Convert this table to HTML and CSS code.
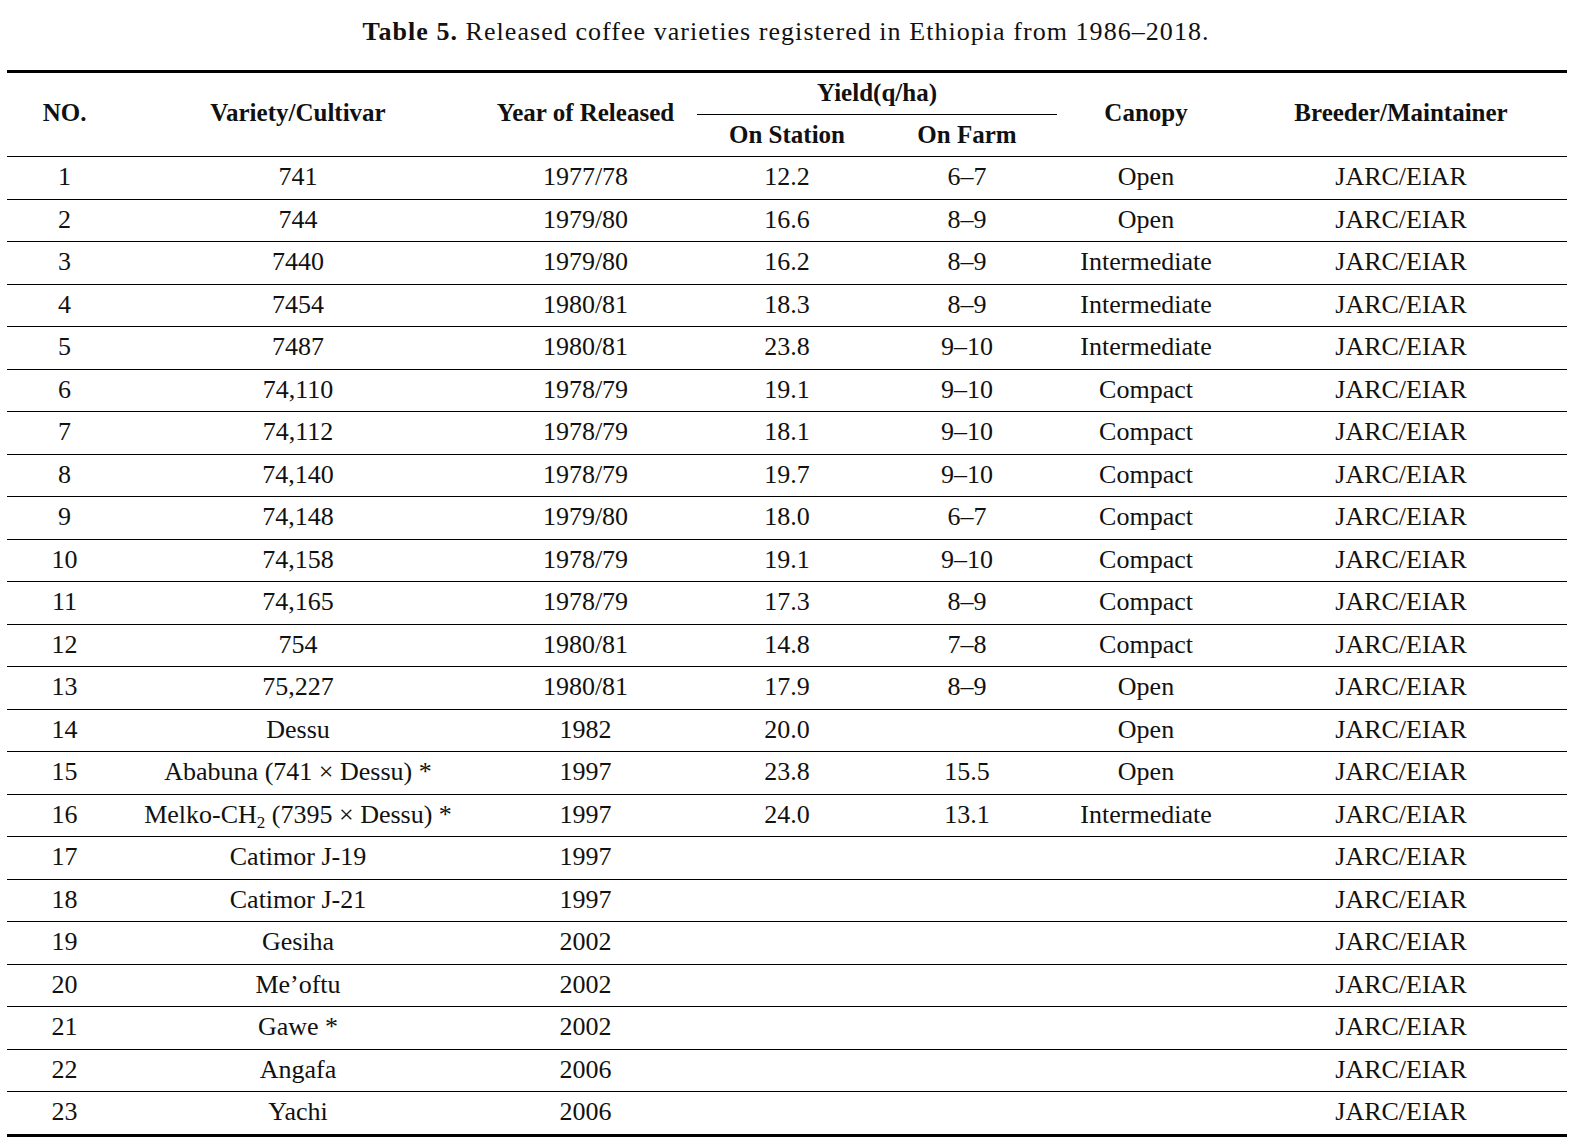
FILE: index.html
```html
<!DOCTYPE html>
<html>
<head>
<meta charset="utf-8">
<link rel="stylesheet" href="styles.css">
</head>
<body>
<p class="caption"><b>Table 5.</b> Released coffee varieties registered in Ethiopia from 1986–2018.</p>
<table class="data">
<colgroup>
<col class="c-no"><col class="c-var"><col class="c-year"><col class="c-st"><col class="c-farm"><col class="c-can"><col class="c-br">
</colgroup>
<thead>
<tr class="h1">
<th rowspan="2">NO.</th>
<th rowspan="2">Variety/Cultivar</th>
<th rowspan="2">Year of Released</th>
<th colspan="2" class="yield">Yield(q/ha)</th>
<th rowspan="2">Canopy</th>
<th rowspan="2">Breeder/Maintainer</th>
</tr>
<tr class="h2">
<th>On Station</th>
<th>On Farm</th>
</tr>
</thead>
<tbody>
<tr><td>1</td><td>741</td><td>1977/78</td><td>12.2</td><td>6–7</td><td>Open</td><td>JARC/EIAR</td></tr>
<tr><td>2</td><td>744</td><td>1979/80</td><td>16.6</td><td>8–9</td><td>Open</td><td>JARC/EIAR</td></tr>
<tr><td>3</td><td>7440</td><td>1979/80</td><td>16.2</td><td>8–9</td><td>Intermediate</td><td>JARC/EIAR</td></tr>
<tr><td>4</td><td>7454</td><td>1980/81</td><td>18.3</td><td>8–9</td><td>Intermediate</td><td>JARC/EIAR</td></tr>
<tr><td>5</td><td>7487</td><td>1980/81</td><td>23.8</td><td>9–10</td><td>Intermediate</td><td>JARC/EIAR</td></tr>
<tr><td>6</td><td>74,110</td><td>1978/79</td><td>19.1</td><td>9–10</td><td>Compact</td><td>JARC/EIAR</td></tr>
<tr><td>7</td><td>74,112</td><td>1978/79</td><td>18.1</td><td>9–10</td><td>Compact</td><td>JARC/EIAR</td></tr>
<tr><td>8</td><td>74,140</td><td>1978/79</td><td>19.7</td><td>9–10</td><td>Compact</td><td>JARC/EIAR</td></tr>
<tr><td>9</td><td>74,148</td><td>1979/80</td><td>18.0</td><td>6–7</td><td>Compact</td><td>JARC/EIAR</td></tr>
<tr><td>10</td><td>74,158</td><td>1978/79</td><td>19.1</td><td>9–10</td><td>Compact</td><td>JARC/EIAR</td></tr>
<tr><td>11</td><td>74,165</td><td>1978/79</td><td>17.3</td><td>8–9</td><td>Compact</td><td>JARC/EIAR</td></tr>
<tr><td>12</td><td>754</td><td>1980/81</td><td>14.8</td><td>7–8</td><td>Compact</td><td>JARC/EIAR</td></tr>
<tr><td>13</td><td>75,227</td><td>1980/81</td><td>17.9</td><td>8–9</td><td>Open</td><td>JARC/EIAR</td></tr>
<tr><td>14</td><td>Dessu</td><td>1982</td><td>20.0</td><td></td><td>Open</td><td>JARC/EIAR</td></tr>
<tr><td>15</td><td>Ababuna (741 × Dessu) *</td><td>1997</td><td>23.8</td><td>15.5</td><td>Open</td><td>JARC/EIAR</td></tr>
<tr><td>16</td><td>Melko-CH<sub>2</sub> (7395 × Dessu) *</td><td>1997</td><td>24.0</td><td>13.1</td><td>Intermediate</td><td>JARC/EIAR</td></tr>
<tr><td>17</td><td>Catimor J-19</td><td>1997</td><td></td><td></td><td></td><td>JARC/EIAR</td></tr>
<tr><td>18</td><td>Catimor J-21</td><td>1997</td><td></td><td></td><td></td><td>JARC/EIAR</td></tr>
<tr><td>19</td><td>Gesiha</td><td>2002</td><td></td><td></td><td></td><td>JARC/EIAR</td></tr>
<tr><td>20</td><td>Me’oftu</td><td>2002</td><td></td><td></td><td></td><td>JARC/EIAR</td></tr>
<tr><td>21</td><td>Gawe *</td><td>2002</td><td></td><td></td><td></td><td>JARC/EIAR</td></tr>
<tr><td>22</td><td>Angafa</td><td>2006</td><td></td><td></td><td></td><td>JARC/EIAR</td></tr>
<tr class="last"><td>23</td><td>Yachi</td><td>2006</td><td></td><td></td><td></td><td>JARC/EIAR</td></tr>
</tbody>
</table>
</body>
</html>
```

FILE: styles.css
```css
html, body {
  margin: 0;
  padding: 0;
  background: #fff;
}
body {
  font-family: "Liberation Serif", "Times New Roman", serif;
  color: #111;
  font-size: 26px;
}
.caption {
  margin: 0;
  padding-top: 16px;
  height: 70px;
  line-height: 32px;
  text-align: center;
  box-sizing: border-box;
  letter-spacing: 1.05px;
}
.caption b {
  font-weight: bold;
}
.data {
  margin-left: 7px;
  width: 1560px;
  table-layout: fixed;
  border-collapse: collapse;
  border-top: 3px solid #000;
  border-bottom: 3px solid #000;
}
.c-no { width: 115px; }
.c-var { width: 352px; }
.c-year { width: 223px; }
.c-st { width: 180px; }
.c-farm { width: 180px; }
.c-can { width: 178px; }
.c-br { width: 332px; }
.data th, .data td {
  padding: 0;
  text-align: center;
  white-space: nowrap;
  line-height: 30px;
}
.data th {
  font-weight: bold;
  font-size: 25px;
}
.data .h1 th {
  height: 40px;
  padding-bottom: 1px;
}
.data .h2 th {
  height: 40px;
  padding-bottom: 1px;
  border-bottom: 1px solid #000;
}
.data th[rowspan] {
  border-bottom: 1px solid #000;
  padding-bottom: 3px;
}
.data th.yield {
  border-bottom: 1px solid #000;
}
.data td {
  height: 40.5px;
  padding-bottom: 1px;
  border-bottom: 1px solid #000;
}
.data tr.last td {
  border-bottom: none;
}
.data sub {
  font-size: 17px;
  line-height: 0;
  vertical-align: -5px;
}
```
